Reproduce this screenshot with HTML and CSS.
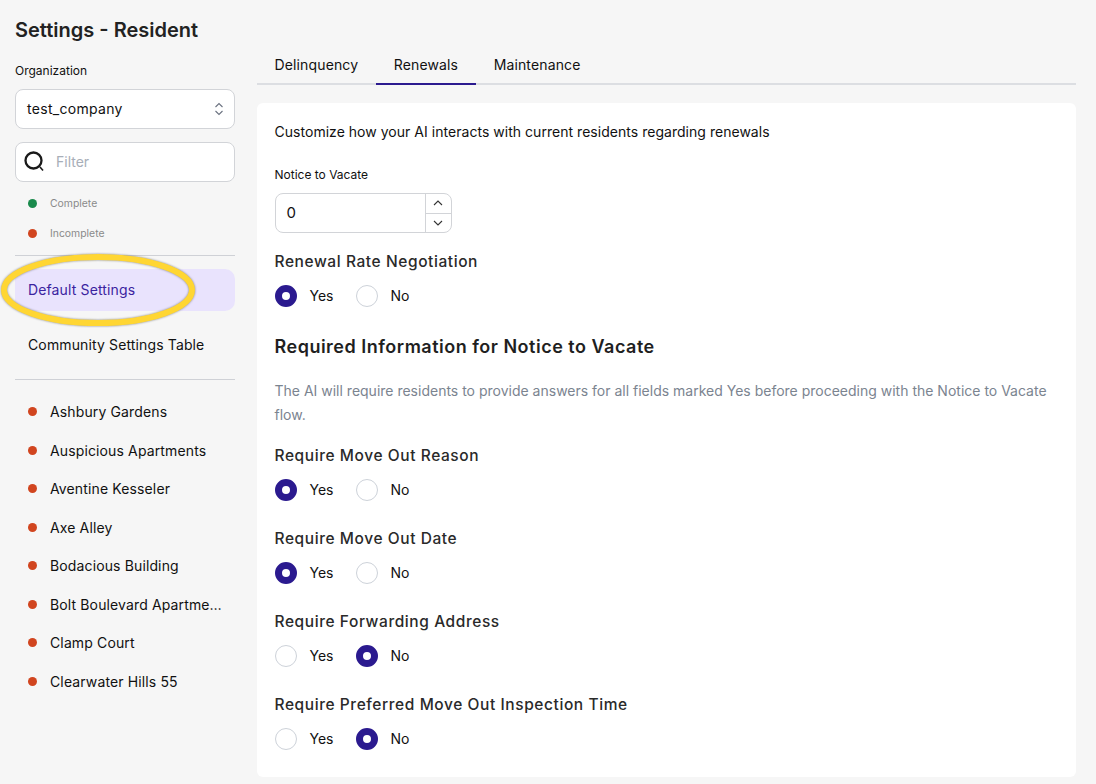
FILE: index.html
```html
<!DOCTYPE html>
<html lang="en">

<head>
  <meta charset="UTF-8">
  <meta name="viewport" content="width=device-width, initial-scale=1.0">
  <title>Settings - Resident</title>
  <link rel="stylesheet" href="styles.css">
</head>
<body>
  <div class="page">
    <aside class="sidebar">
      <h1>Settings - Resident</h1>
      <label class="org-label">Organization</label>
      <div class="field select-field">
        <span>test_company</span>
        <svg width="10" height="14" viewBox="0 0 10 14" fill="none" stroke="#6b7280" stroke-width="1.1"><path d="M1.5 5 L5 1.5 L8.5 5"/><path d="M1.5 9 L5 12.5 L8.5 9"/></svg>
      </div>
      <div class="field filter-field">
        <svg width="24" height="24" viewBox="0 0 24 24" fill="none" stroke="#1a1a1a"><circle cx="10.5" cy="10.5" r="8" stroke-width="2.3"/><path d="M17 17 L20 20.5" stroke-width="1.6"/></svg>
        <span>Filter</span>
      </div>
      <ul class="legend">
        <li><i class="dot green"></i>Complete</li>
        <li><i class="dot red"></i>Incomplete</li>
      </ul>
      <hr>
      <div class="nav-item active">Default Settings</div>
      <div class="nav-item">Community Settings Table</div>
      <hr class="lower">
      <ul class="communities">
        <li><i class="dot red"></i><span>Ashbury Gardens</span></li>
        <li><i class="dot red"></i><span>Auspicious Apartments</span></li>
        <li><i class="dot red"></i><span>Aventine Kesseler</span></li>
        <li><i class="dot red"></i><span>Axe Alley</span></li>
        <li><i class="dot red"></i><span>Bodacious Building</span></li>
        <li><i class="dot red"></i><span>Bolt Boulevard Apartme…</span></li>
        <li><i class="dot red"></i><span>Clamp Court</span></li>
        <li><i class="dot red"></i><span>Clearwater Hills 55</span></li>
      </ul>
    </aside>

    <main class="content">
      <nav class="tabs">
        <div class="tab">Delinquency</div>
        <div class="tab selected">Renewals</div>
        <div class="tab">Maintenance</div>
      </nav>

      <section class="card">
        <p class="intro">Customize how your AI interacts with current residents regarding renewals</p>
        <label class="small-label">Notice to Vacate</label>
        <div class="number-input">
          <span class="value">0</span>
          <div class="stepper">
            <div><svg width="10" height="6" viewBox="0 0 10 6" fill="none" stroke="#333" stroke-width="1.1"><path d="M1 5 L5 1 L9 5"/></svg></div>
            <div><svg width="10" height="6" viewBox="0 0 10 6" fill="none" stroke="#333" stroke-width="1.1"><path d="M1 1 L5 5 L9 1"/></svg></div>
          </div>
        </div>

        <h3 class="first">Renewal Rate Negotiation</h3>
        <div class="radios">
          <i class="radio on"></i><span>Yes</span><i class="radio"></i><span>No</span>
        </div>

        <h2>Required Information for Notice to Vacate</h2>
        <p class="hint">The AI will require residents to provide answers for all fields marked Yes before proceeding with the Notice to Vacate flow.</p>

        <h3 class="after-hint">Require Move Out Reason</h3>
        <div class="radios">
          <i class="radio on"></i><span>Yes</span><i class="radio"></i><span>No</span>
        </div>

        <h3>Require Move Out Date</h3>
        <div class="radios">
          <i class="radio on"></i><span>Yes</span><i class="radio"></i><span>No</span>
        </div>

        <h3>Require Forwarding Address</h3>
        <div class="radios">
          <i class="radio"></i><span>Yes</span><i class="radio on"></i><span>No</span>
        </div>

        <h3>Require Preferred Move Out Inspection Time</h3>
        <div class="radios">
          <i class="radio"></i><span>Yes</span><i class="radio on"></i><span>No</span>
        </div>
      </section>
    </main>
  </div>

  <!-- Yellow annotation drawn on top of the screenshot -->
  <svg class="annotation" width="200" height="80" viewBox="0 0 200 80" fill="none">
    <ellipse cx="98" cy="38" rx="94" ry="33" stroke="#ffd633" stroke-width="6"/>
  </svg>
</body>

</html>
```

FILE: styles.css
```css
* {
  box-sizing: border-box;
}

body {
  margin: 0;
  background-color: #f6f6f6;
  color: #111;
  font-family: Inter, "Liberation Sans", sans-serif;
  font-size: 14px;
  height: 784px;
  overflow: hidden;
  position: relative;
}

.page {
  display: flex;
  align-items: flex-start;
}

/* Sidebar */
.sidebar {
  width: 220px;
  margin-left: 15px;
  flex-shrink: 0;
}

h1 {
  margin: 18px 0 0;
  font-size: 20px;
  line-height: 24px;
  font-weight: 600;
  color: #222;
}

.org-label {
  display: block;
  margin-top: 21px;
  font-size: 12px;
  line-height: 16px;
}

.field {
  display: flex;
  align-items: center;
  height: 40px;
  background: #fff;
  border: 1px solid #d2d4d8;
  border-radius: 8px;
}

.field span {
  margin-bottom: 2px;
}

.select-field {
  margin-top: 10px;
  padding: 0 10px 0 11px;
  justify-content: space-between;
  letter-spacing: 0.3px;
}

.filter-field {
  margin-top: 13px;
  padding-left: 7px;
  gap: 9px;
  color: #a8aeb8;
}

.legend,
.communities {
  list-style: none;
  margin: 0;
  padding: 0;
}

.legend {
  margin-top: 6px;
  font-size: 10.4px;
  color: #8a8a8a;
}

.legend li {
  display: flex;
  align-items: center;
  height: 30px;
}

.dot {
  width: 9px;
  height: 9px;
  border-radius: 50%;
  margin: 0 13px;
  flex-shrink: 0;
}

.green {
  background: #1a8a4c;
}

.red {
  background: #d1451f;
}

hr {
  margin: 7px 0 0;
  border: none;
  border-top: 1px solid #cfd1d6;
}

hr.lower {
  margin-top: 13px;
}

.nav-item {
  height: 42px;
  margin-top: 13px;
  padding: 0 0 2px 13px;
  display: flex;
  align-items: center;
  border-radius: 10px;
  letter-spacing: 0.13px;
}

.nav-item.active {
  background: #e9e3fd;
  color: #3b23a0;
}

.communities {
  margin-top: 12.5px;
  letter-spacing: 0.13px;
}

.communities li {
  display: flex;
  align-items: center;
  height: 38.5px;
}

.communities span {
  white-space: nowrap;
}

/* Main column */
.content {
  width: 819px;
  margin: 45px 0 0 22px;
}

.tabs {
  display: flex;
  height: 40px;
  border-bottom: 2px solid #dcdee2;
}

.tab {
  height: 40px;
  margin-bottom: -2px;
  padding: 0 18px 0 17.5px;
  display: flex;
  align-items: center;
  border-bottom: 2px solid transparent;
  letter-spacing: 0.14px;
}

.tab.selected {
  border-bottom-color: #2b1a8f;
}

.card {
  margin-top: 18px;
  height: 674px;
  padding: 18px 18px 0 17.5px;
  background: #fff;
  border-radius: 6px;
}

.intro {
  margin: 0;
  line-height: 22px;
  letter-spacing: 0.03px;
}

.small-label {
  display: block;
  margin-top: 24px;
  font-size: 12px;
  line-height: 16px;
}

.number-input {
  display: flex;
  width: 177px;
  height: 40px;
  margin-top: 10px;
  border: 1px solid #d2d4d8;
  border-radius: 8px;
}

.value {
  flex: 1;
  padding-left: 11px;
  line-height: 38px;
  font-size: 15px;
}

.stepper {
  width: 26px;
  border-left: 1px solid #d2d4d8;
  display: flex;
  flex-direction: column;
}

.stepper div {
  flex: 1;
  display: flex;
  align-items: center;
  justify-content: center;
}

.stepper div + div {
  border-top: 1px solid #d2d4d8;
}

/* Headings stand in for the geometric face of the original */
h3 {
  margin: 28px 0 0;
  font-size: 15.5px;
  line-height: 20px;
  font-weight: 500;
  letter-spacing: 0.58px;
  color: #2a2a2a;
}

h3.first {
  margin-top: 19px;
}

h3.after-hint {
  margin-top: 19px;
}

h2 {
  margin: 28px 0 0;
  font-size: 18px;
  line-height: 24px;
  font-weight: 600;
  letter-spacing: 0.5px;
  color: #1f1f1f;
}

.hint {
  margin: 20px 0 0;
  line-height: 24px;
  color: #7b8490;
}

.radios {
  display: flex;
  align-items: center;
  height: 22px;
  margin-top: 13px;
}

.radio {
  width: 22px;
  height: 22px;
  border-radius: 50%;
  border: 1px solid #cdd2d9;
  flex-shrink: 0;
}

.radio.on {
  border: 7px solid #2b1a8f;
}

.radios span {
  margin: 0 0 2px 13px;
  width: 46px;
}

.annotation {
  position: absolute;
  left: 0;
  top: 252px;
  filter: drop-shadow(0 0 1px rgba(90, 90, 90, 0.7));
}
```
